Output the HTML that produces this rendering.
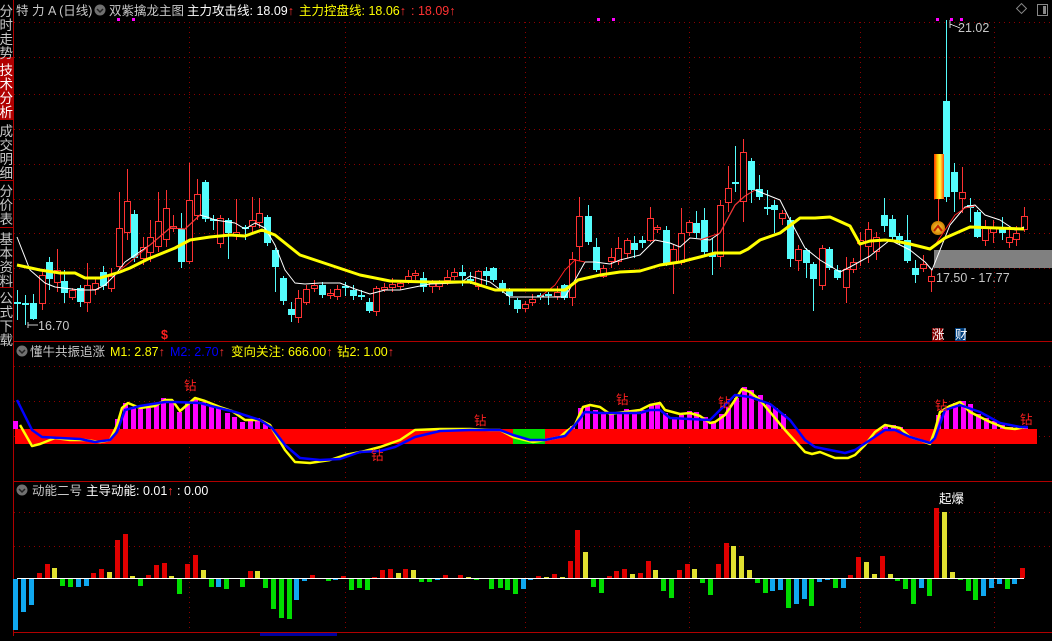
<!DOCTYPE html>
<html><head><meta charset="utf-8">
<style>
html,body{margin:0;padding:0;background:#000;width:1052px;height:636px;overflow:hidden}
#c{position:absolute;left:0;top:0}
.t{font-family:"Liberation Sans","Noto Sans CJK SC",sans-serif;font-size:12.5px}
</style></head><body>
<div id="c"></div>
<script>
var s='<svg xmlns="http://www.w3.org/2000/svg" width="1052" height="636" viewBox="0 0 1052 636" shape-rendering="crispEdges">';
function L(x1,y1,x2,y2,c,w,d){s+='<line x1="'+x1+'" y1="'+y1+'" x2="'+x2+'" y2="'+y2+'" stroke="'+c+'" stroke-width="'+(w||1)+'"'+(d?' stroke-dasharray="'+d+'"':'')+'/>';}
function R(x,y,w,h,f,st){s+='<rect x="'+x+'" y="'+y+'" width="'+w+'" height="'+h+'" fill="'+f+'"'+(st?' stroke="'+st+'"':'')+'/>';}
function P(pts,c,w){s+='<polyline fill="none" stroke="'+c+'" stroke-width="'+w+'" stroke-linejoin="round" shape-rendering="auto" points="'+pts+'"/>';}
function T(x,y,txt,c,fs,extra){s+='<text class="t" x="'+x+'" y="'+y+'" fill="'+c+'"'+(fs?' font-size="'+fs+'"':'')+(extra||'')+'>'+txt+'</text>';}
var AR='<tspan fill="#ff3232" font-weight="bold">↑</tspan>';
var G='#8c0000',D='1 4';
[22,57,94,129,164,199,233,268,303].forEach(function(y){L(14,y+.5,1052,y+.5,G,1,D)});
[189,345,525,689,860,994].forEach(function(x){L(x+.5,22,x+.5,340,G,1,D);L(x+.5,362,x+.5,480,G,1,D);L(x+.5,502,x+.5,632,G,1,D)});
[366,401,436].forEach(function(y){L(14,y+.5,1052,y+.5,G,1,D)});
[512,546].forEach(function(y){L(14,y+.5,1052,y+.5,G,1,D)});
L(13.5,0,13.5,636,'#b00000');L(14,341.5,1052,341.5,'#b00000');L(14,481.5,1052,481.5,'#b00000');L(14,632.5,1052,632.5,'#b00000');
R(0,58,13,61,'#b00000');
[57,119,180,227,287].forEach(function(y){L(0,y+.5,13,y+.5,'#b00000')});
var side=[['分时走势',4],['技术分析',63],['成交明细',124],['分价表',184],['基本资料',232],['公式下载',291]];
side.forEach(function(a){for(var i=0;i<a[0].length;i++){s+='<text x="-0.5" y="'+(a[1]+12+i*14)+'" fill="'+(a[0]=='技术分析'?'#fff':'#c8c8c8')+'" font-family="Noto Sans CJK SC,sans-serif" font-size="13.5">'+a[0][i]+'</text>'}});
var C=[[17,302,304,290,320,'c'],[25,303,305,295,325,'c'],[33,303,319,294,320,'c'],[42,275,304,270,310,'r'],[49,262,279,257,290,'c'],[57,270,283,249,292,'r'],[64,281,293,270,303,'c'],[72,290,298,288,300,'r'],[80,288,302,285,307,'c'],[87,285,303,263,312,'r'],[95,283,290,278,295,'r'],[103,272,286,266,290,'c'],[111,276,289,268,292,'r'],[119,228,267,192,270,'r'],[127,201,233,169,240,'r'],[134,214,258,210,262,'c'],[143,247,259,237,265,'r'],[150,237,253,220,262,'r'],[158,221,247,192,252,'r'],[166,208,240,190,247,'r'],[173,226,229,215,232,'r'],[181,229,262,213,268,'c'],[189,200,262,163,264,'r'],[197,194,216,179,220,'r'],[205,182,219,180,222,'c'],[213,219,221,215,230,'c'],[220,218,244,215,248,'r'],[228,220,233,218,259,'c'],[236,232,236,199,240,'r'],[245,227,229,225,240,'c'],[252,220,227,197,232,'r'],[259,213,223,198,228,'r'],[267,217,243,215,246,'c'],[275,250,267,248,292,'c'],[283,278,301,276,305,'c'],[291,309,315,302,322,'c'],[298,298,318,290,323,'r'],[306,289,303,285,305,'r'],[314,285,289,280,292,'r'],[322,285,295,282,298,'c'],[330,293,296,289,299,'r'],[337,289,297,285,300,'r'],[345,286,288,282,296,'c'],[353,290,296,285,300,'c'],[361,295,297,290,300,'c'],[369,302,311,298,313,'c'],[376,288,312,286,316,'r'],[384,287,290,283,292,'r'],[392,284,288,278,292,'r'],[400,283,287,280,290,'r'],[408,276,281,270,284,'r'],[415,273,276,270,280,'r'],[423,278,287,272,292,'c'],[432,283,287,280,293,'r'],[439,283,287,280,290,'r'],[447,277,281,270,285,'r'],[454,272,277,268,280,'r'],[462,272,276,265,286,'c'],[470,279,281,272,284,'c'],[478,271,287,270,290,'r'],[486,271,276,267,285,'c'],[493,268,280,267,282,'c'],[502,283,289,280,293,'c'],[509,291,296,288,305,'c'],[517,300,309,298,313,'c'],[525,304,309,301,312,'r'],[532,299,303,294,306,'r'],[540,295,297,293,300,'c'],[548,294,296,292,305,'c'],[557,292,297,286,300,'r'],[564,285,298,284,300,'c'],[572,259,298,252,306,'r'],[579,216,247,197,261,'r'],[588,216,242,205,245,'c'],[596,247,270,238,272,'c'],[603,268,277,265,278,'r'],[611,257,262,248,268,'r'],[618,248,262,237,265,'r'],[627,240,254,238,258,'r'],[634,243,250,236,258,'c'],[642,240,243,236,248,'c'],[650,218,241,207,242,'r'],[657,227,230,225,233,'r'],[666,230,263,226,266,'c'],[673,249,263,245,294,'r'],[681,233,263,208,265,'r'],[689,222,233,220,236,'r'],[696,223,233,211,238,'c'],[704,220,252,208,255,'c'],[712,254,257,238,275,'c'],[720,205,257,200,267,'r'],[728,188,203,166,212,'r'],[735,182,184,146,192,'c'],[743,152,202,139,222,'r'],[751,161,190,158,203,'c'],[759,189,197,175,200,'c'],[767,207,209,190,215,'c'],[774,205,210,200,233,'c'],[782,213,219,210,225,'r'],[790,220,259,217,267,'c'],[798,249,261,245,271,'r'],[806,250,263,248,278,'c'],[813,264,279,262,311,'c'],[822,248,286,245,290,'r'],[829,249,268,247,270,'c'],[837,270,278,265,280,'c'],[846,269,288,257,303,'r'],[853,262,270,258,273,'r'],[860,240,244,232,266,'r'],[868,229,247,222,263,'r'],[876,237,252,232,260,'r'],[884,215,226,198,232,'c'],[892,219,237,215,242,'c'],[899,236,240,233,245,'c'],[907,240,261,215,263,'c'],[915,268,275,260,283,'c'],[923,264,269,255,272,'r'],[931,276,282,270,292,'r'],[946,101,197,20,202,'c'],[954,172,192,163,212,'c'],[962,192,199,167,213,'r'],[970,205,208,198,222,'c'],[977,212,237,210,238,'c'],[985,227,241,220,246,'r'],[993,227,233,220,243,'r'],[1002,227,233,217,240,'c'],[1009,237,243,230,248,'r'],[1016,233,240,226,246,'r'],[1024,216,230,207,232,'r']];
R(934,250,118,18,'#808080');
C.forEach(function(k){var x=k[0],col=k[5]=='c'?'#54fcfc':'#ff3232';L(x+.5,k[3],x+.5,k[4],col);
 if(k[5]=='c')R(x-3,k[1],7,Math.max(1,k[2]-k[1]),col);else R(x-2.5,k[1]+.5,6,Math.max(1,k[2]-k[1]-1),'#000',col);});
s+='<defs><linearGradient id="g" x1="0" x2="1"><stop offset="0" stop-color="#ff3000"/><stop offset=".35" stop-color="#ffd000"/><stop offset=".6" stop-color="#ffff40"/><stop offset="1" stop-color="#ff4000"/></linearGradient><radialGradient id="o"><stop offset="0" stop-color="#ffd040"/><stop offset="1" stop-color="#d08000"/></radialGradient></defs>';
L(938.5,199,938.5,222,'#ff3232');R(934,154,10,45,'url(#g)');
s+='<circle cx="938" cy="228" r="7" fill="url(#o)" shape-rendering="auto"/><polyline points="934,231 938,226 942,231" fill="none" stroke="#c02000" stroke-width="2" shape-rendering="auto"/>';
P('17,237 30,270 45,283 55,287 80,290 95,290 105,285 115,275 125,262 135,255 150,245 170,228 185,229 200,215 207,217 215,220 235,223 245,229 255,223 265,228 275,245 285,270 295,283 305,284 320,283 340,283 355,289 370,294 385,290 400,290 430,284 460,283 470,276 490,282 510,297 530,297 565,297 575,280 585,262 595,262 610,264 620,260 640,255 655,240 670,243 680,247 690,238 710,240 720,233 735,205 745,196 755,190 760,192 780,200 790,220 805,248 820,260 840,272 850,267 870,256 890,240 910,250 925,262 932,270 940,250 950,225 965,207 975,205 985,215 1000,220 1015,230 1024,227','#fff',1);
P('120,270 130,262 150,245 170,228 185,229 200,215','#ff2020',1);
P('540,297 555,285 565,270 575,260 585,262','#ff2020',1);
P('700,240 720,233 735,205 745,196 755,190','#ff2020',1);
P('935,245 945,230 955,215 965,208 975,206','#ff2020',1);
P('17,265 40,270 60,273 75,273 85,278 100,278 120,272 130,268 148,259 175,248 190,240 210,237 230,235 245,236 262,230 275,235 300,255 330,265 360,275 390,281 430,282 470,282 495,290 520,290 565,290 578,280 600,275 620,272 640,271 660,265 680,262 700,257 715,253 740,253 748,249 760,240 780,233 800,218 815,218 830,217 850,226 860,244 870,241 885,240 895,241 910,244 930,249 945,238 970,227 1024,229','#ffff00',3);
T(958,32,'21.02','#c8c8c8',12.5);L(950,24,960,28,'#c8c8c8');L(950,20,950,28,'#c8c8c8');
T(936,282,'17.50 - 17.77','#c8c8c8',12.5);
T(38,330,'16.70','#c8c8c8',12.5);L(28,325,38,325,'#c8c8c8');L(28,322,28,328,'#c8c8c8');
T(161,339,'$','#ff2020',11,' font-weight="bold"');
R(932,328,11,13,'#800000');T(932,339,'涨','#fff',11);
R(955,328,11,13,'#004080');T(955,339,'财','#fff',11);
[118,133,598,613,937,951,961].forEach(function(x){R(x-1,18,3,3,'#ff00ff')});
function circ(x,y){s+='<circle cx="'+x+'" cy="'+y+'" r="5.5" fill="#707070" shape-rendering="auto"/><polyline points="'+(x-3)+','+(y-1)+' '+x+','+(y+2)+' '+(x+3)+','+(y-1)+'" fill="none" stroke="#222" stroke-width="1.5" shape-rendering="auto"/>';}
T(16,15,'特 力 A (日线)','#c8c8c8');circ(100,10);
T(109,15,'双紫擒龙主图','#c8c8c8');
T(187,15,'主力攻击线: 18.09'+AR,'#fff');
T(299,15,'主力控盘线: 18.06'+AR,'#ffff00');
T(411,15,' : 18.09'+AR,'#ff3232');
s+='<rect x="1018" y="5" width="7" height="7" fill="none" stroke="#888" transform="rotate(45 1021.5 8.5)" shape-rendering="auto"/>';
R(1037.5,4.5,10,11,'none','#888');R(1043,6,3,8,'#888');
circ(22,351);
T(30,356,'懂牛共振追涨','#c8c8c8');
T(110,356,'M1: 2.87'+AR,'#ffff00');
T(170,356,'M2: 2.70'+AR,'#0000ff');
T(231,356,'变向关注: 666.00'+AR,'#ffff00');
T(337,356,'钻2: 1.00'+AR,'#ffff00');
R(15,429,1022,15,'#ff0000');R(513,429,32,15,'#00e000');
var M=[[15,421],[117,419],[125,403],[133,408],[140,409],[148,408],[156,403],[163,398],[171,400],[179,412],[187,403],[195,398],[203,402],[211,405],[218,408],[227,413],[234,417],[242,422],[250,420],[257,418],[265,424],[572,426],[580,408],[587,405],[595,410],[603,413],[611,413],[619,412],[626,409],[634,410],[643,410],[651,404],[657,404],[665,413],[674,417],[681,415],[689,411],[696,412],[705,417],[713,423],[721,414],[728,407],[736,398],[744,387],[751,390],[760,395],[768,403],[775,408],[783,414],[885,426],[893,425],[900,427],[938,415],[946,408],[955,403],[963,401],[970,404],[978,414],[986,418],[994,421],[1002,425],[1010,427],[1025,426]];
M.forEach(function(m){R(m[0]-2,m[1],5,429-m[1],'#ff00ff')});
P('20,425 32,446 40,444 55,438 70,440 85,440 100,442 110,440 117,425 122,408 128,403 140,408 155,406 165,400 172,400 180,411 187,405 195,398 205,401 220,407 232,411 245,420 260,420 270,425 285,450 295,462 310,463 330,460 345,455 365,451 380,447 400,440 415,430 440,429 470,429 490,430 500,430 513,437 533,442 545,440 560,437 567,431 575,425 578,418 583,407 590,405 600,407 610,414 640,410 650,405 660,403 665,410 680,414 690,413 700,416 710,423 715,422 725,415 735,400 742,389 750,392 760,400 770,412 785,430 805,452 812,454 820,452 835,458 848,458 855,455 865,445 875,432 885,425 900,428 910,437 920,440 930,444 935,430 940,412 950,406 960,402 970,412 990,422 1005,428 1015,429 1025,427','#ffff00',2.5);
P('17,400 32,430 42,437 60,438 80,439 95,442 110,440 117,432 125,410 140,406 165,402 175,402 200,403 215,407 235,412 260,420 272,428 285,445 300,458 320,460 340,459 360,452 380,451 395,447 415,437 440,431 470,430 500,430 513,435 530,440 545,440 565,436 575,425 585,412 600,413 640,413 650,410 660,410 670,418 690,419 710,420 720,410 735,395 750,397 770,404 790,420 805,440 815,447 830,450 845,453 855,450 870,440 885,430 895,430 910,437 930,443 935,438 945,410 960,405 980,412 1000,423 1020,427 1028,427','#0000ff',2.5);
[[184,390],[371,460],[474,425],[616,404],[718,407],[935,410],[1020,424]].forEach(function(p){T(p[0],p[1],'钻','#ff2020',13)});
circ(22,490);
T(32,495,'动能二号','#c8c8c8');
T(86,495,'主导动能: 0.01'+AR,'#fff');
T(177,495,' : 0.00','#fff');
var cols={r:'#e00000',y:'#e0e030',g:'#00dd00',b:'#10a8f0'};
var B=[[15,'b',630],[23,'b',612],[31,'b',605],[39,'r',573],[47,'r',564],[54,'y',568],[62,'g',586],[70,'g',587],[78,'b',587],[86,'b',586],[93,'r',573],[101,'r',569],[109,'y',572],[117,'r',540],[125,'r',534],[132,'y',576],[140,'g',586],[148,'r',575],[156,'r',565],[164,'r',563],[171,'y',576],[179,'g',594],[187,'r',564],[195,'r',555],[203,'y',570],[211,'g',587],[218,'b',587],[226,'g',589],[242,'g',587],[250,'r',571],[257,'y',571],[265,'g',588],[273,'g',609],[281,'g',618],[289,'g',619],[296,'b',600],[304,'b',581],[312,'r',575],[328,'g',581],[335,'b',580],[343,'r',576],[351,'g',590],[359,'g',588],[367,'g',590],[374,'r',577],[382,'r',570],[390,'r',569],[398,'y',573],[405,'r',569],[413,'y',570],[421,'g',582],[429,'g',582],[437,'b',580],[445,'r',575],[460,'r',575],[468,'y',577],[476,'g',580],[491,'g',589],[500,'g',588],[507,'g',590],[515,'g',594],[523,'b',589],[530,'b',580],[538,'r',576],[546,'y',577],[554,'r',574],[562,'y',577],[570,'r',561],[577,'r',530],[585,'y',552],[593,'g',587],[601,'g',593],[609,'r',576],[616,'r',571],[624,'r',569],[632,'y',574],[640,'r',573],[648,'r',561],[655,'y',570],[663,'g',591],[671,'g',598],[679,'r',570],[687,'r',564],[694,'y',569],[702,'g',583],[710,'g',595],[718,'r',564],[726,'r',543],[733,'y',546],[741,'y',556],[749,'y',570],[757,'g',583],[765,'g',593],[772,'b',591],[780,'b',590],[788,'g',608],[796,'b',604],[804,'b',599],[811,'g',606],[819,'b',582],[827,'b',580],[835,'g',588],[843,'b',588],[850,'r',575],[858,'r',557],[866,'y',562],[874,'y',574],[882,'r',556],[890,'y',574],[897,'g',581],[905,'g',589],[913,'g',604],[921,'b',588],[929,'g',596],[936,'r',508],[944,'y',512],[952,'y',572],[960,'g',580],[968,'g',591],[975,'g',600],[983,'b',596],[991,'b',588],[999,'b',584],[1007,'g',589],[1014,'b',584],[1022,'r',568]];
B.forEach(function(b){var y=b[2];if(y<578)R(b[0]-2,y,5,578-y,cols[b[1]]);else R(b[0]-2,579,5,y-579,cols[b[1]]);});
L(17,578.5,1024,578.5,'#fff');
T(939,503,'起爆','#fff',9);
R(260,633,77,3,'#0000a0');
s+='</svg>';
document.getElementById('c').innerHTML=s;
</script>
</body></html>
